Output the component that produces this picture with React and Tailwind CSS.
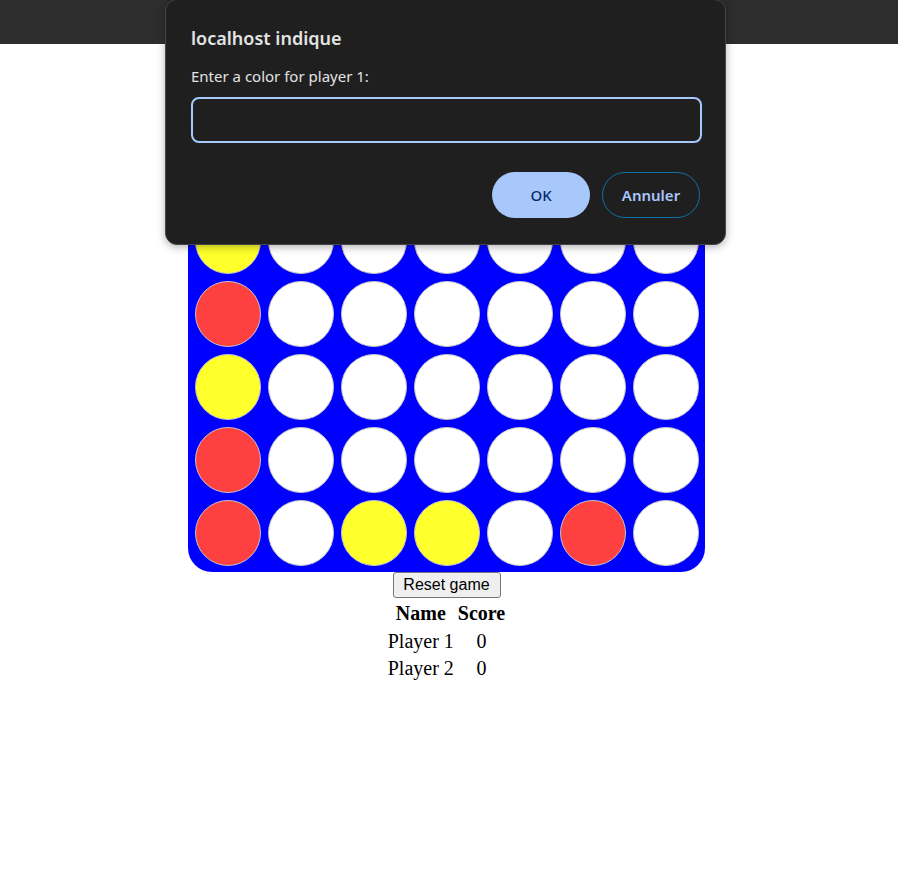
import React from "react";

const R = "r";
const Y = "y";
const W = "w";

const board = [
  [W, W, W, W, W, W, W],
  [Y, W, W, W, W, W, W],
  [R, W, W, W, W, W, W],
  [Y, W, W, W, W, W, W],
  [R, W, W, W, W, W, W],
  [R, W, Y, Y, W, R, W],
];

const cellColor = {
  r: "bg-[#ff4040]",
  y: "bg-[#ffff2b]",
  w: "bg-white",
};

function Board() {
  return (
    <div className="grid w-[517px] grid-cols-[repeat(7,66px)] justify-center gap-[7px] rounded-[24px] bg-[#0000ff] py-[6px]">
      {board.flatMap((row, r) =>
        row.map((cell, c) => (
          <div
            key={`${r}-${c}`}
            className={`h-[66px] w-[66px] rounded-full border border-[#c4c4c4] ${cellColor[cell]}`}
          />
        )),
      )}
    </div>
  );
}

function Scores() {
  const players = [
    { name: "Player 1", score: 0 },
    { name: "Player 2", score: 0 },
  ];
  return (
    <table className="mt-[1px] border-separate border-spacing-[2px] font-['Liberation_Serif',serif] text-[20px] leading-[23.5px] text-black">
      <thead>
        <tr>
          <th className="p-[1px] text-center font-bold">Name</th>
          <th className="p-[1px] text-center font-bold">Score</th>
        </tr>
      </thead>
      <tbody>
        {players.map((p) => (
          <tr key={p.name}>
            <td className="p-[1px] text-center">{p.name}</td>
            <td className="p-[1px] text-center">{p.score}</td>
          </tr>
        ))}
      </tbody>
    </table>
  );
}

function PromptDialog() {
  return (
    <div className="absolute left-[165px] top-[-1px] h-[246px] w-[561px] rounded-[12px] border border-[#454545] bg-[#1f1f1f] px-[25px] font-['Noto_Sans',sans-serif] shadow-[0_2px_8px_rgba(0,0,0,0.3)]">
      <div className="mt-[26px] text-[18px] font-semibold leading-[24px] text-[#e3e3e3]">
        localhost indique
      </div>
      <div className="mt-[16px] text-[15px] leading-[20px] text-[#e3e3e3]">
        Enter a color for player 1:
      </div>
      <div className="mt-[11px] h-[46px] w-[511px] rounded-[8px] border-2 border-[#a8c7fa] bg-[#1f1f1f]" />
      <div className="mt-[29px] flex justify-end gap-[12px]">
        <button
          type="button"
          className="h-[46px] w-[98px] rounded-full bg-[#a8c7fa] text-[15px] font-medium text-[#062e6f]"
        >
          OK
        </button>
        <button
          type="button"
          className="h-[46px] w-[98px] rounded-full border border-[#0f74a6] text-[15px] font-semibold text-[#a8c7fa]"
        >
          Annuler
        </button>
      </div>
    </div>
  );
}

export default function App() {
  return (
    <div className="relative min-h-[888px] bg-white">
      <div className="h-[44px] w-full bg-[#2d2d2d]" />
      <div className="flex flex-col items-center pr-[5px] pt-[85px]">
        <Board />
        <button
          type="button"
          className="h-[26px] w-[108px] rounded-[3px] border border-[#767676] bg-[#efefef] font-['Liberation_Sans',Arial,sans-serif] text-[16px] text-black"
        >
          Reset game
        </button>
        <Scores />
      </div>
      <PromptDialog />
    </div>
  );
}
